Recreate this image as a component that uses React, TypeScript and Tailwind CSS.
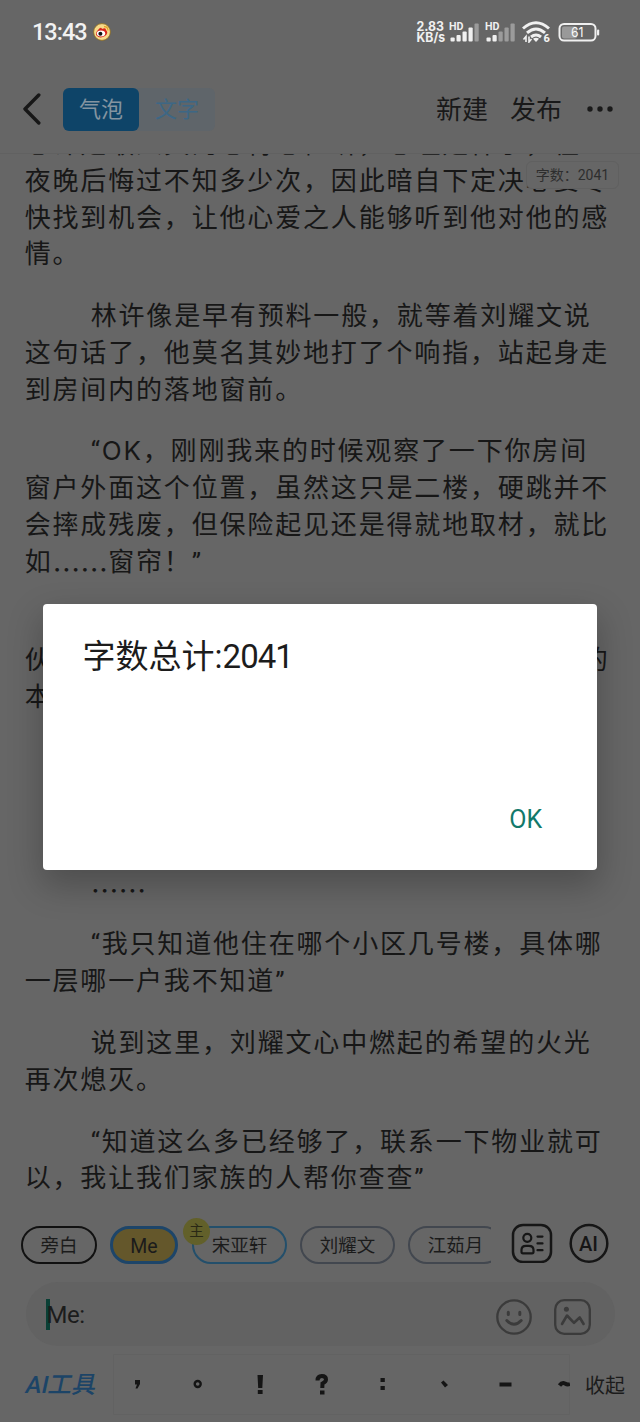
import type { ReactNode } from 'react'
import clsx from 'clsx'

type Paragraph = { lines: ReactNode[]; indent?: boolean }

// six evenly spaced dots sitting on the baseline
const dots = <span className="relative top-[9px] font-['Noto_Sans_CJK_SC'] text-[27.8px] leading-none tracking-normal">……</span>

const paragraphs: Paragraph[] = [
  {
    lines: [
      '心许是敢人真的心得心忙听，心理是样了，在',
      '夜晚后悔过不知多少次，因此暗自下定决心要尽',
      '快找到机会，让他心爱之人能够听到他对他的感',
      '情。',
    ],
  },
  { indent: true, lines: ['林许像是早有预料一般，就等着刘耀文说', '这句话了，他莫名其妙地打了个响指，站起身走', '到房间内的落地窗前。'] },
  {
    indent: true,
    lines: [
      <>
        “<span className="font-[Inter]">OK</span>，刚刚我来的时候观察了一下你房间
      </>,
      '窗户外面这个位置，虽然这只是二楼，硬跳并不',
      '会摔成残废，但保险起见还是得就地取材，就比',
      <>如{dots}窗帘！”</>,
    ],
  },
  {
    lines: [
      '',
      <span className="flex w-[585px] justify-between">
        <span>伙</span>
        <span>的</span>
      </span>,
      '本',
    ],
  },
  { lines: [''] },
  { lines: [''] },
  { indent: true, lines: [dots] },
  { indent: true, lines: ['“我只知道他住在哪个小区几号楼，具体哪', '一层哪一户我不知道”'] },
  { indent: true, lines: ['说到这里，刘耀文心中燃起的希望的火光', '再次熄灭。'] },
  { indent: true, lines: ['“知道这么多已经够了，联系一下物业就可', '以，我让我们家族的人帮你查查”'] },
]

function Signal({ active }: { active: number }) {
  return (
    <svg className="h-[22px] w-[30px]" viewBox="0 0 30 22">
      <text x="0" y="8.6" fontSize="10" fontWeight="700" fill="#f0f0f0" textLength="14.5" lengthAdjust="spacingAndGlyphs">
        HD
      </text>
      {[4, 6.5, 10, 14, 18].map((h, i) => (
        <rect key={h} x={1.5 + i * 6} y={20.5 - h} width="4.2" height={h} rx="1" fill={i < active ? '#f0f0f0' : '#9b9b9b'} />
      ))}
    </svg>
  )
}

function StatusBar() {
  return (
    <div className="flex h-16 shrink-0 items-center pl-8 pr-10 text-[#f2f2f2]">
      <span className="w-[55px] whitespace-nowrap pt-0.5 text-[23.5px] font-medium leading-none tracking-[-1px]">13:43</span>
      <svg className="ml-[6px] h-[18px] w-[18px]" viewBox="0 0 18 18">
        <circle cx="9" cy="9" r="8.4" fill="#f6d98a" stroke="#8a6a1c" strokeWidth="0.8" />
        <path d="M5 7Q8 3 9 6Q13 4 13 7Q16 10 12 13Q7 16 3.5 12.5Q2 10 5 7Z" fill="#d8261c" />
        <ellipse cx="8" cy="10.6" rx="4.2" ry="3" fill="#fff" />
        <circle cx="7.4" cy="10.7" r="2" fill="#111" />
        <path d="M11 3.6Q14.8 3.5 15 7.5" fill="none" stroke="#e8a020" strokeWidth="1.2" />
      </svg>
      <div className="ml-auto flex items-center">
        <svg className="mr-[3px] h-6 w-[30px] overflow-visible" viewBox="0 0 30 24" fontFamily="Inter" fontWeight="700" fill="#f0f0f0">
          <text x="0.5" y="11" fontSize="13" textLength="27.5" lengthAdjust="spacingAndGlyphs">
            2.83
          </text>
          <text x="0.5" y="22.3" fontSize="13" textLength="28.5" lengthAdjust="spacingAndGlyphs">
            KB/s
          </text>
        </svg>
        <Signal active={4} />
        <span className="w-[6px]" />
        <Signal active={2} />
        <svg className="ml-[7px] h-[22px] w-[29px]" viewBox="0 0 29 22" fill="none" stroke="#f0f0f0" strokeWidth="3">
          <path d="M1 7.5Q14 -4 27 7.5M5 11.9Q14 4 23 11.9M9 16Q14 11.9 19 16" />
          <path d="M11 17.8Q14 15.8 17 17.8L14 21Z" fill="#f0f0f0" stroke="none" />
          <path d="M4 21V15.5L1.5 18.5M7 15.5V21L9.5 18" strokeWidth="1.6" />
          <text x="21.5" y="21.3" fontSize="11" fontWeight="800" fill="#f0f0f0" stroke="none">
            6
          </text>
        </svg>
        <svg className="ml-[7px] h-[19px] w-[42px]" viewBox="0 0 42 19">
          <rect x="4" y="3.5" width="15" height="12" rx="2" fill="#999" />
          <rect x="1.5" y="1" width="36" height="16.5" rx="4.5" fill="none" stroke="#f0f0f0" strokeWidth="2" />
          <rect x="39" y="6.5" width="2.2" height="6" rx="1" fill="#f0f0f0" />
          <text x="13" y="14" fontSize="13.5" fontFamily="Inter" fill="#f8f8f8" textLength="12.5" lengthAdjust="spacingAndGlyphs">
            61
          </text>
        </svg>
      </div>
    </div>
  )
}

function Header() {
  return (
    <div className="flex h-[90px] shrink-0 items-center border-b border-[#616161] pl-[22px] pr-[26px] pt-[1px]">
      <svg className="h-8 w-5" viewBox="0 0 20 32" fill="none" stroke="#171717" strokeWidth="3.4" strokeLinecap="round" strokeLinejoin="round">
        <path d="M16.8 2L3 16L16.8 30" />
      </svg>
      <div className="ml-[21px] flex h-[43px] w-[152px] rounded-md bg-[#5f656a] text-[22px]">
        <div className="flex w-[76px] items-center justify-center rounded-md bg-[#0e4468] pt-px text-[#8494a0]">气泡</div>
        <div className="flex w-[76px] items-center justify-center pt-px text-[#3d6785]">文字</div>
      </div>
      <div className="ml-auto flex items-center text-[26px] text-[#191919]">
        <span className="pt-0.5">新建</span>
        <span className="ml-[22px] pt-0.5">发布</span>
        <svg className="ml-[25px] h-[6px] w-[27px]" viewBox="0 0 27 6" fill="#1a1a1a">
          <circle cx="3" cy="3" r="2.7" />
          <circle cx="13" cy="3" r="2.7" />
          <circle cx="23" cy="3" r="2.7" />
        </svg>
      </div>
    </div>
  )
}

function Story() {
  return (
    <div className="relative h-[1050px] shrink-0 overflow-hidden">
      <div className="-mt-7 flex flex-col gap-[25.1px] pl-[24.7px] text-[26px] leading-[36.75px] tracking-[1.83px] text-[#171717]">
        {paragraphs.map((p, i) => (
          <div key={i}>
            {p.lines.map((line, j) => (
              <div key={j} className={clsx('h-[36.75px] whitespace-nowrap', p.indent && j === 0 && 'pl-[66px]')}>
                {line}
              </div>
            ))}
          </div>
        ))}
      </div>
      <div className="absolute right-[21px] top-[7px] flex h-[28px] w-[93px] items-center justify-center whitespace-pre rounded-md border border-[#606060] bg-[#666] pt-px text-[14px] text-[#2e2e2e]">
        字数：2041
      </div>
    </div>
  )
}

function Chip({ className, children }: { className: string; children: ReactNode }) {
  return (
    <div className={clsx('relative flex h-[38px] shrink-0 items-center justify-center rounded-full pt-[3px]', className)}>{children}</div>
  )
}

function Characters() {
  return (
    <div className="flex h-[78px] pl-[21px] pt-1">
      <div className="flex h-full w-[470px] items-center overflow-hidden text-[18.5px] text-[#1b1b1b]">
        <Chip className="w-[76px] border-2 border-[#111]">旁白</Chip>
        <Chip className="ml-[13px] w-[68px] border-[3px] border-[#1d4569] bg-[#64572b] text-[19.5px]">Me</Chip>
        <Chip className="ml-[14px] w-[95px] border-2 border-[#234f6b]">
          宋亚轩
          <span className="absolute -left-[11px] -top-[10px] flex h-[27px] w-[27px] items-center justify-center rounded-full bg-[#62602a] pt-px text-[14.5px] text-[#292815]">
            主
          </span>
        </Chip>
        <Chip className="ml-[13px] w-[95px] border-2 border-[#42474f]">刘耀文</Chip>
        <Chip className="ml-[13px] w-[95px] border-2 border-[#42474f]">江茹月</Chip>
      </div>
      <svg className="ml-5 mt-[15px] h-10 w-[42px]" viewBox="0 0 42 40" fill="none" stroke="#161616" strokeWidth="2.5" strokeLinecap="round">
        <rect x="2" y="2" width="38" height="37" rx="10" />
        <circle cx="16.3" cy="14.8" r="4" strokeWidth="2.2" />
        <path d="M10.5 27Q10.5 22.8 15 22.8H17.8Q22.5 22.8 22.5 27V28.7Q22.5 30.3 21 30.3H12Q10.5 30.3 10.5 28.7Z" strokeWidth="2.2" />
        <path d="M26.5 13.6H31.5M26.5 20.4H31.5M26.5 27.2H31.5" strokeWidth="2.2" />
      </svg>
      <svg className="ml-4 mt-[15px] h-10 w-10" viewBox="0 0 40 40">
        <circle cx="20" cy="20.4" r="18.3" fill="none" stroke="#161616" strokeWidth="2.5" />
        <text x="10" y="27.8" fontSize="21" fontWeight="500" fill="#161616" textLength="19" lengthAdjust="spacingAndGlyphs">
          AI
        </text>
      </svg>
    </div>
  )
}

function InputBar() {
  return (
    <div className="ml-[26px] flex h-16 w-[589px] items-center rounded-[32px] bg-[#626262] pl-5 pr-6">
      <span className="h-[31px] w-1 bg-[#0a3f35]" />
      <span className="-ml-[3.5px] pt-px text-[24px] tracking-[-0.5px] text-[#1c1c1c]">Me:</span>
      <svg className="ml-auto mt-[6px] h-9 w-9" viewBox="0 0 36 36" fill="none" stroke="#3b3b3b" strokeWidth="2.3" strokeLinecap="round">
        <circle cx="18" cy="18" r="16.7" />
        <path d="M12.3 13.2V15.6M23.8 13.2V15.6" strokeWidth="3" />
        <path d="M10.8 21.5Q18 29 25.2 21.5" strokeWidth="2.9" />
      </svg>
      <svg className="ml-[22px] mt-[6px] h-9 w-[37px]" viewBox="0 0 37 36" fill="none" stroke="#3b3b3b" strokeWidth="2.3" strokeLinecap="round" strokeLinejoin="round">
        <rect x="1.2" y="1.2" width="34.6" height="33.6" rx="9" />
        <circle cx="12.4" cy="10.2" r="2.5" fill="#3b3b3b" stroke="none" />
        <path d="M8 25L13 16.5L20 23.8L25.7 18.5L29.6 25" strokeWidth="2.6" />
      </svg>
    </div>
  )
}

function PunctuationBar() {
  return (
    <div className="flex h-[76px] items-center pt-0.5">
      <span className="ml-[26px] w-[87px] shrink-0 -skew-x-12 whitespace-nowrap text-[24px] font-medium text-[#1c4467]">AI工具</span>
      <svg className="h-[62px] w-[457px] shrink-0" viewBox="113 1354 457 62" fill="#151515">
        <path d="M113.5 1354.5H569.5V1414.5H113.5Z" fill="none" stroke="#626262" strokeWidth="1" />
        <path d="M135 1380H140V1384L137.5 1388.5H135.5L137 1384.5H135Z" />
        <circle cx="197.7" cy="1384" r="3" fill="none" stroke="#151515" strokeWidth="2.4" />
        <path d="M257.5 1375H263L262.3 1388H258.2ZM257.8 1390H262.6V1394H257.8Z" />
        <path d="M317.5 1380.5Q317.5 1376 321.8 1376Q326 1376 326 1379.5Q326 1381.8 322.5 1383.5L322.3 1388" fill="none" stroke="#151515" strokeWidth="4" />
        <path d="M320 1390.5H324.5V1394.5H320ZM380.5 1378H384.8V1382H380.5ZM380.5 1386H384.8V1390H380.5Z" />
        <path d="M441 1382.5L443.5 1380.5L448 1385L445 1387.5ZM499.5 1382.5H511.5V1386.5H499.5Z" />
        <path d="M559.5 1385.5Q562 1382 565 1383.5Q567.5 1385 570 1384" fill="none" stroke="#151515" strokeWidth="4" />
      </svg>
      <span className="ml-[15px] whitespace-nowrap pt-px text-[20px] text-[#1b1b1b]">收起</span>
    </div>
  )
}

function CountDialog() {
  return (
    <div className="absolute left-[42.6px] top-[603.5px] flex h-[266px] w-[554.6px] flex-col justify-between rounded-[4px] bg-white px-10 pb-[34px] pt-[29px] shadow-[0_14px_34px_2px_rgba(0,0,0,0.24)]">
      <h2 className="whitespace-nowrap text-[33px] leading-[48px] text-[#1c1c1c]">
        字数总计:<span className="tracking-[-1px]">2041</span>
      </h2>
      <button className="mr-[15px] self-end text-[25px] leading-8 text-[#12796b]">OK</button>
    </div>
  )
}

export default function App() {
  return (
    <div className="relative flex h-[1422px] w-[640px] flex-col overflow-hidden bg-[#666] font-[Roboto,'Noto_Sans_CJK_SC',sans-serif]">
      <StatusBar />
      <Header />
      <Story />
      <div className="h-[218px] shrink-0 rounded-t-[28px]">
        <Characters />
        <InputBar />
        <PunctuationBar />
      </div>
      <CountDialog />
    </div>
  )
}
